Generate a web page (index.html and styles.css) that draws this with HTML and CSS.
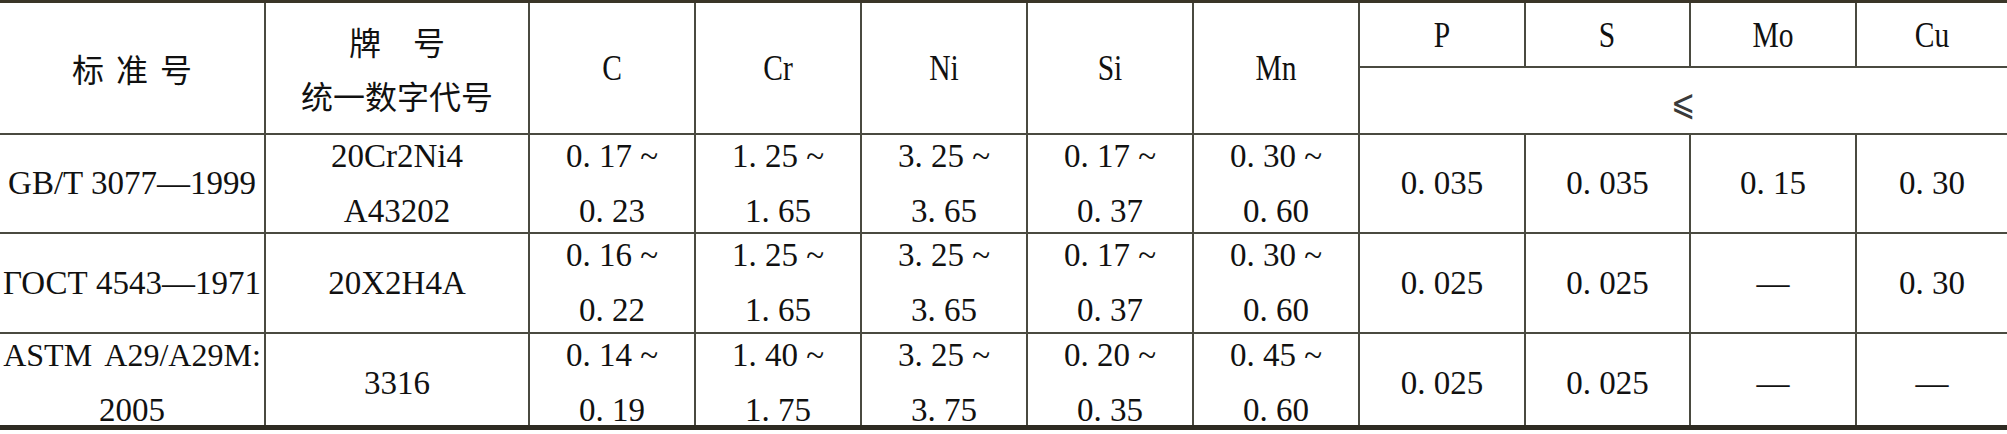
FILE: index.html
```html
<!DOCTYPE html>
<html>
<head>
<meta charset="utf-8">
<title>化学成分对照</title>
<link rel="stylesheet" href="styles.css">
</head>
<body>
<div class="table">
  <div class="cell hd span2 cjk"><span class="spaced">标准号</span></div>
  <div class="cell hd span2 cjk two"><span>牌　号</span><span>统一数字代号</span></div>
  <div class="cell hd span2"><span class="cond">C</span></div>
  <div class="cell hd span2"><span class="cond">Cr</span></div>
  <div class="cell hd span2"><span class="cond">Ni</span></div>
  <div class="cell hd span2"><span class="cond">Si</span></div>
  <div class="cell hd span2"><span class="cond">Mn</span></div>
  <div class="cell hd"><span class="cond">P</span></div>
  <div class="cell hd"><span class="cond">S</span></div>
  <div class="cell hd"><span class="cond">Mo</span></div>
  <div class="cell hd"><span class="cond">Cu</span></div>
  <div class="cell hd le"><span class="le-glyph">⩽</span></div>

  <div class="cell">GB/T 3077—1999</div>
  <div class="cell two"><span>20Cr2Ni4</span><span>A43202</span></div>
  <div class="cell two"><span>0. 17 ~</span><span>0. 23</span></div>
  <div class="cell two"><span>1. 25 ~</span><span>1. 65</span></div>
  <div class="cell two"><span>3. 25 ~</span><span>3. 65</span></div>
  <div class="cell two"><span>0. 17 ~</span><span>0. 37</span></div>
  <div class="cell two"><span>0. 30 ~</span><span>0. 60</span></div>
  <div class="cell">0. 035</div>
  <div class="cell">0. 035</div>
  <div class="cell">0. 15</div>
  <div class="cell">0. 30</div>

  <div class="cell">ГОСТ 4543—1971</div>
  <div class="cell">20Х2Н4А</div>
  <div class="cell two"><span>0. 16 ~</span><span>0. 22</span></div>
  <div class="cell two"><span>1. 25 ~</span><span>1. 65</span></div>
  <div class="cell two"><span>3. 25 ~</span><span>3. 65</span></div>
  <div class="cell two"><span>0. 17 ~</span><span>0. 37</span></div>
  <div class="cell two"><span>0. 30 ~</span><span>0. 60</span></div>
  <div class="cell">0. 025</div>
  <div class="cell">0. 025</div>
  <div class="cell">—</div>
  <div class="cell">0. 30</div>

  <div class="cell r3 two"><span class="astm">ASTM A29/A29M:</span><span>2005</span></div>
  <div class="cell r3">3316</div>
  <div class="cell r3 two"><span>0. 14 ~</span><span>0. 19</span></div>
  <div class="cell r3 two"><span>1. 40 ~</span><span>1. 75</span></div>
  <div class="cell r3 two"><span>3. 25 ~</span><span>3. 75</span></div>
  <div class="cell r3 two"><span>0. 20 ~</span><span>0. 35</span></div>
  <div class="cell r3 two"><span>0. 45 ~</span><span>0. 60</span></div>
  <div class="cell r3">0. 025</div>
  <div class="cell r3">0. 025</div>
  <div class="cell r3">—</div>
  <div class="cell r3">—</div>
</div>
</body>
</html>
```
FILE: styles.css
```css
html, body {
  margin: 0;
  padding: 0;
  background: #ffffff;
}
body {
  width: 2007px;
  height: 434px;
  overflow: hidden;
}
.table {
  display: grid;
  grid-template-columns: 264px 262px 164px 164px 164px 164px 164px 164px 163px 164px 150px;
  grid-template-rows: 63px 65px 97px 98px 91px;
  gap: 2px;
  background: #4a4a40;
  border-top: 3px solid #3a3528;
  border-bottom: 5px solid #2e2b22;
  font-family: "Liberation Serif", "Times New Roman", serif;
  font-size: 33px;
  color: #111;
}
.cell {
  background: #ffffff;
  display: flex;
  flex-direction: column;
  align-items: center;
  justify-content: center;
  line-height: 1;
  white-space: nowrap;
  overflow: visible;
}
.two {
  line-height: 55px;
}
.r3 {
  padding-top: 7px;
}
.astm {
  word-spacing: 6px;
  font-size: 32px;
}
.span2 {
  grid-row: span 2;
}
.le {
  grid-column: 8 / span 4;
  font-family: "DejaVu Sans", "DejaVu Serif", serif;
  font-size: 36px;
  padding-top: 4px;
}
.le-glyph {
  display: inline-block;
  color: #3a3a3a;
  transform: scaleX(0.8);
}
.cjk {
  font-family: "Noto Sans CJK SC", "Noto Sans CJK JP", sans-serif;
  font-size: 32px;
}
.cjk.two {
  line-height: 54px;
}
.spaced {
  letter-spacing: 12px;
  padding-left: 12px;
}
.cond {
  display: inline-block;
  font-size: 36px;
  transform: scaleX(0.82);
}
```
